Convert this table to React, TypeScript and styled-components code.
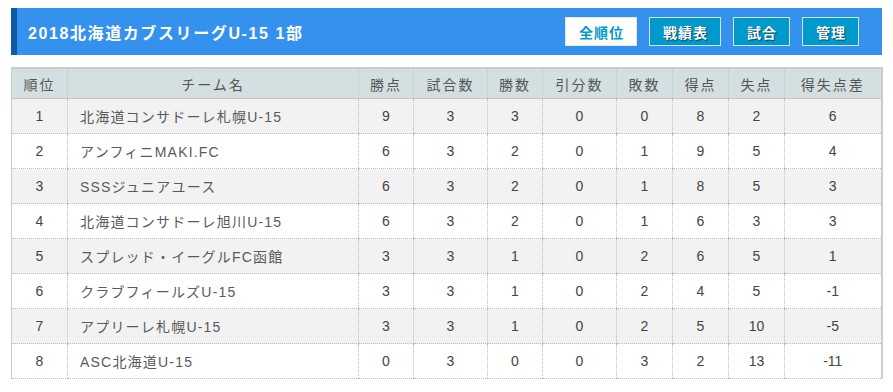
import React from "react";
import styled, { createGlobalStyle } from "styled-components";

const Global = createGlobalStyle`
  html, body { margin: 0; padding: 0; background: #fff; }
  body { font-family: "Liberation Sans", Arial, "Noto Sans CJK JP", sans-serif; color: #444; }
`;

const Page = styled.div`
  padding: 8px 11px 0 11px;
  width: 871px;
`;

const TitleBar = styled.div`
  display: flex;
  align-items: center;
  justify-content: space-between;
  height: 47px;
  background: #3591ee;
  border-left: 6px solid #0d5aa7;
  padding: 0 23px 0 11px;
  box-sizing: border-box;
`;

const Title = styled.h1`
  margin: 0;
  font-size: 16px;
  font-weight: bold;
  color: #fff;
  letter-spacing: 1.6px;
  font-family: "Liberation Sans", Arial, "Noto Sans CJK JP", sans-serif;
`;

const Nav = styled.nav`
  display: flex;
  gap: 12px;
`;

const NavButton = styled.a<{ $active?: boolean }>`
  display: flex;
  align-items: center;
  height: 29px;
  box-sizing: border-box;
  padding: 0 12px 0 13px;
  border: 1px solid ${(p) => (p.$active ? "#e6e6e6" : "#d8e4ec")};
  background: ${(p) => (p.$active ? "#fff" : "#0099cc")};
  color: ${(p) => (p.$active ? "#0099cc" : "#fff")};
  font-size: 14px;
  font-weight: bold;
  letter-spacing: 1px;
  text-shadow: ${(p) => (p.$active ? "none" : "1px 1px 1px rgba(0,0,0,0.55)")};
  text-decoration: none;
  cursor: pointer;
`;

const Table = styled.table`
  margin-top: 12px;
  width: 870px;
  border-collapse: collapse;
  table-layout: fixed;
  border-top: 2px solid #cccccc;
  border-left: 1px solid #cccccc;
  border-right: 2px solid #cccccc;
`;

const Th = styled.th`
  height: 29px;
  padding: 0;
  background: #d3dfe0;
  color: #555;
  font-size: 14px;
  font-weight: normal;
  letter-spacing: 2px;
  text-align: center;
  border-left: 1px dotted #c4c4c4;
  border-bottom: 1px solid #c4c4c4;
  &:first-child { border-left: none; }
`;

const Tr = styled.tr<{ $odd: boolean }>`
  background: ${(p) => (p.$odd ? "#f2f2f2" : "#ffffff")};
`;

const Td = styled.td<{ $left?: boolean }>`
  height: 34px;
  padding: 0;
  padding-left: ${(p) => (p.$left ? "12px" : "0")};
  text-align: ${(p) => (p.$left ? "left" : "center")};
  font-size: 14px;
  letter-spacing: ${(p) => (p.$left ? "1.2px" : "0")};
  color: ${(p) => (p.$left ? "#5a5a5a" : "#444")};
  border-left: 1px dotted #bdbdbd;
  border-bottom: 1px dotted #bdbdbd;
  white-space: nowrap;
  &:first-child { border-left: none; }
`;

const cols = [56, 291, 55, 74, 55, 74, 56, 56, 56, 97];
const headers = ["順位", "チーム名", "勝点", "試合数", "勝数", "引分数", "敗数", "得点", "失点", "得失点差"];

const rows: (string | number)[][] = [
  [1, "北海道コンサドーレ札幌U-15", 9, 3, 3, 0, 0, 8, 2, 6],
  [2, "アンフィニMAKI.FC", 6, 3, 2, 0, 1, 9, 5, 4],
  [3, "SSSジュニアユース", 6, 3, 2, 0, 1, 8, 5, 3],
  [4, "北海道コンサドーレ旭川U-15", 6, 3, 2, 0, 1, 6, 3, 3],
  [5, "スプレッド・イーグルFC函館", 3, 3, 1, 0, 2, 6, 5, 1],
  [6, "クラブフィールズU-15", 3, 3, 1, 0, 2, 4, 5, -1],
  [7, "アプリーレ札幌U-15", 3, 3, 1, 0, 2, 5, 10, -5],
  [8, "ASC北海道U-15", 0, 3, 0, 0, 3, 2, 13, -11],
];

export default function App() {
  return (
    <>
      <Global />
      <Page>
        <TitleBar>
          <Title>2018北海道カブスリーグU-15 1部</Title>
          <Nav>
            <NavButton $active>全順位</NavButton>
            <NavButton>戦績表</NavButton>
            <NavButton>試合</NavButton>
            <NavButton>管理</NavButton>
          </Nav>
        </TitleBar>
        <Table>
          <colgroup>
            {cols.map((w, i) => (
              <col key={i} style={{ width: w }} />
            ))}
          </colgroup>
          <thead>
            <tr>
              {headers.map((h) => (
                <Th key={h}>{h}</Th>
              ))}
            </tr>
          </thead>
          <tbody>
            {rows.map((r, i) => (
              <Tr key={i} $odd={i % 2 === 0}>
                {r.map((c, j) => (
                  <Td key={j} $left={j === 1}>
                    {c}
                  </Td>
                ))}
              </Tr>
            ))}
          </tbody>
        </Table>
      </Page>
    </>
  );
}
